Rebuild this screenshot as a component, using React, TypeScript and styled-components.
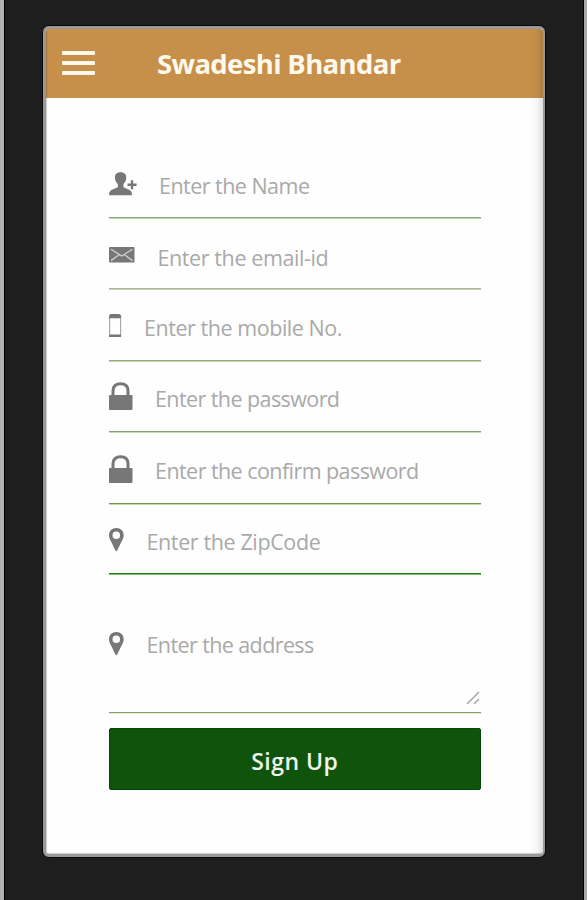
import React from "react";
import styled, { createGlobalStyle } from "styled-components";

const GlobalStyle = createGlobalStyle`
  * { box-sizing: border-box; }
  body {
    margin: 0;
    overflow: hidden;
    font-family: "Open Sans", "Noto Sans", sans-serif;
  }
`;

const Backdrop = styled.div`
  width: 587px;
  height: 900px;
  padding: 25px 38px 0 38px;
  background: #1e1e1e;
  border-left: 4px solid #b1b1b1;
  border-right: 3px solid #a9a9a9;
  box-shadow: inset 1px 0 0 #000, inset -1px 0 0 #000;
`;

const Phone = styled.main`
  width: 504px;
  height: 833px;
  border: 1px solid #080808;
  border-radius: 7px;
  background: #999;
  padding: 3px 2px 3px 3px;
`;

const Screen = styled.div`
  position: relative;
  height: 100%;
  display: flex;
  flex-direction: column;
  overflow: hidden;
  border-radius: 3px;
  background: #fefefe;

  &::after {
    content: "";
    position: absolute;
    inset: 0;
    pointer-events: none;
    background: linear-gradient(to left, rgba(0, 0, 0, 0.12), rgba(0, 0, 0, 0.03) 6px, transparent 13px);
    box-shadow: inset 1px -1px 1px rgba(0, 0, 0, 0.2);
  }
`;

const Header = styled.header`
  flex: none;
  height: 69px;
  display: flex;
  align-items: center;
  padding-left: 16px;
  background: #c6904b;
`;

const MenuButton = styled.button`
  width: 33px;
  height: 24px;
  margin-top: -1px;
  padding: 0;
  border: 0;
  background: none;
  display: flex;
  flex-direction: column;
  justify-content: space-between;
`;

const MenuBar = styled.span`
  height: 4px;
  border-radius: 1px;
  background: #fff8ec;
`;

const Title = styled.h1`
  margin: 0 0 0 62px;
  font-size: 27.5px;
  line-height: 38px;
  font-weight: 700;
  letter-spacing: -0.65px;
  color: #fff8ec;
  white-space: nowrap;
`;

const Form = styled.form`
  width: 371.5px;
  margin: 50px 0 0 63px;
  display: flex;
  flex-direction: column;
`;

const Field = styled.label<{ $height: number; $line: string; $glow: string; $top: number }>`
  position: relative;
  height: ${(p) => p.$height}px;
  display: flex;
  align-items: flex-start;
  padding-top: ${(p) => p.$top}px;
  border-bottom: 1px solid ${(p) => p.$glow};
  box-shadow: inset 0 -1px 0 ${(p) => p.$line};
`;

const IconBox = styled.span<{ $width: number; $gap: number; $lift: number }>`
  flex: none;
  width: ${(p) => p.$width}px;
  height: 30px;
  margin-top: -${(p) => p.$lift}px;
  margin-right: ${(p) => p.$gap}px;

  svg {
    display: block;
    fill: #777;
  }
`;

const Placeholder = styled.span<{ $spacing: number }>`
  font-size: 21.5px;
  line-height: 30px;
  letter-spacing: ${(p) => p.$spacing}px;
  color: #a9a9a9;
  white-space: nowrap;
`;

const ResizeGrip = styled.svg`
  position: absolute;
  right: 1px;
  bottom: 8px;
`;

const SubmitButton = styled.button`
  height: 62px;
  margin-top: 14px;
  padding: 4px 0 0;
  border: 1px solid #084508;
  border-radius: 2px;
  background: #10540c;
  color: #eef5ec;
  font: 600 23px/30px "Open Sans", "Noto Sans", sans-serif;
  letter-spacing: 0.45px;
`;

const PersonIcon = () => (
  <svg width="29" height="30" viewBox="0 0 29 30">
    <path d="M11.5 3.2c-3.9 0-6 2.2-5.5 6 .2 2.4 1.2 4.2 2.8 5.9v3.1L3 20.7C.9 21.6 0 23 0 26.3h23c0-3.4-.9-4.7-3-5.6l-5.5-2.5v-3.1c1.5-1.7 2.5-3.5 2.7-5.9.5-3.8-1.8-6-5.7-6Z" />
    <path d="M21.8 11.3h2.4v3.2h3.4v2.4h-3.4v3.4h-2.4v-3.4h-3.3v-2.4h3.3Z" />
  </svg>
);

const MailIcon = () => (
  <svg width="26" height="30" viewBox="0 0 26 30">
    <rect y="7" width="25.5" height="15.5" rx="1" />
    <path d="m2 9.2 10.7 6.8L23.5 9.2M2 20.6l8-5.8m5.5 0 8 5.8" fill="none" stroke="#d0d0d0" strokeWidth="1.3" />
  </svg>
);

const MobileIcon = () => (
  <svg width="13" height="30" viewBox="0 0 13 30">
    <path d="M.6 5v21M11.6 5v21" stroke="#aaa" strokeWidth="1.2" />
    <path d="M0 6.5Q0 4 2 4h8q2 0 2 2.5v1.7H0ZM0 24.5h12V27H0Z" />
  </svg>
);

const LockIcon = () => (
  <svg width="24" height="30" viewBox="0 0 24 30">
    <path d="M4 15V9.8C4 5 7.2 2.8 11.5 2.8S19 5 19 9.8V15" fill="none" stroke="#777" strokeWidth="3" />
    <rect y="14" width="23.5" height="15" rx="1" />
  </svg>
);

const PinIcon = () => (
  <svg width="15" height="30" viewBox="0 0 15 30">
    <path
      fillRule="evenodd"
      d="M7.3 4C3 4 0 6.9 0 11.2c0 2.3.9 4.1 2.1 6.2L6.4 26.4q.9 1.6 1.8 0L12.6 17.4c1.2-2.1 2.1-3.9 2.1-6.2C14.7 6.9 11.6 4 7.3 4Zm0 3.4a3.8 3.8 0 1 1 0 7.6 3.8 3.8 0 0 1 0-7.6Z"
    />
  </svg>
);

const fields = [
  { text: "Enter the Name", Icon: PersonIcon, width: 29, gap: 21, lift: 2, height: 71, top: 23, spacing: -0.53, line: "#8aad78", glow: "#bed3b3" },
  { text: "Enter the email-id", Icon: MailIcon, width: 26, gap: 22.5, lift: 3, height: 71, top: 24, spacing: -0.4, line: "#adb89d", glow: "#c4cdb6" },
  { text: "Enter the mobile No.", Icon: MobileIcon, width: 13, gap: 22, lift: 3, height: 72, top: 23, spacing: -0.45, line: "#8fae7d", glow: "#c1d5b4" },
  { text: "Enter the password", Icon: LockIcon, width: 24, gap: 22, lift: 3, height: 71, top: 22, spacing: -0.58, line: "#86a277", glow: "#c1dfb5" },
  { text: "Enter the confirm password", Icon: LockIcon, width: 24, gap: 22, lift: 2, height: 72, top: 23, spacing: -0.56, line: "#719653", glow: "#b5dea0" },
  { text: "Enter the ZipCode", Icon: PinIcon, width: 15, gap: 22.5, lift: 3, height: 70, top: 22, spacing: -0.38, line: "#237e18", glow: "#7fb86f" },
  { text: "Enter the address", Icon: PinIcon, width: 15, gap: 22.5, lift: 2, height: 139, top: 55, spacing: -0.6, line: "#829f69", glow: "#e0ebd4", grip: true },
];

export default function App() {
  return (
    <>
      <GlobalStyle />
      <Backdrop>
        <Phone>
          <Screen>
            <Header>
              <MenuButton type="button" aria-label="Menu">
                <MenuBar />
                <MenuBar />
                <MenuBar />
              </MenuButton>
              <Title>Swadeshi Bhandar</Title>
            </Header>
            <Form>
              {fields.map(({ text, Icon, width, gap, lift, height, top, spacing, line, glow, grip }) => (
                <Field key={text} $height={height} $top={top} $line={line} $glow={glow}>
                  <IconBox $width={width} $gap={gap} $lift={lift}>
                    <Icon />
                  </IconBox>
                  <Placeholder $spacing={spacing}>{text}</Placeholder>
                  {grip && (
                    <ResizeGrip width="14" height="14" viewBox="0 0 14 14">
                      <path d="M1 13 13 1M8 13l5-5" stroke="#aaa" strokeWidth="1.6" />
                    </ResizeGrip>
                  )}
                </Field>
              ))}
              <SubmitButton type="button">Sign Up</SubmitButton>
            </Form>
          </Screen>
        </Phone>
      </Backdrop>
    </>
  );
}
